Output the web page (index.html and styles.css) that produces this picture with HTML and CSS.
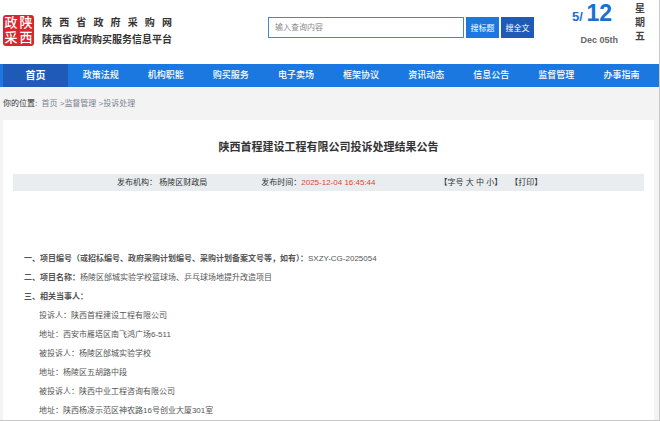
FILE: index.html
```
<!DOCTYPE html>
<html lang="zh-CN">
<head>
  <meta charset="UTF-8">
  <meta name="viewport" content="width=device-width, initial-scale=1.0">
  <title>陕西首程建设工程有限公司投诉处理结果公告</title>
  <link rel="stylesheet" href="styles.css">
</head>
<body>
  <header class="header">
    <a class="logo" href="#">
      <span class="seal"><span>政</span><span>陕</span><span>采</span><span>西</span></span>
      <span class="logo-text">
        <span class="logo-name">陕西省政府采购网</span>
        <span class="logo-sub">陕西省政府购买服务信息平台</span>
      </span>
    </a>

    <form class="search">
      <input class="search-input" type="text" placeholder="输入查询内容" aria-label="输入查询内容">
      <button class="search-btn" type="button">搜标题</button>
      <button class="search-btn search-full" type="button">搜全文</button>
    </form>

    <div class="date">
      <div class="date-main">
        <div class="date-num">5/ <b>12</b></div>
        <div class="date-en">Dec 05th</div>
      </div>
      <div class="week">星期五</div>
    </div>
  </header>

  <nav class="nav">
    <a class="active" href="#">首页</a>
    <a href="#">政策法规</a>
    <a href="#">机构职能</a>
    <a href="#">购买服务</a>
    <a href="#">电子卖场</a>
    <a href="#">框架协议</a>
    <a href="#">资讯动态</a>
    <a href="#">信息公告</a>
    <a href="#">监督管理</a>
    <a href="#">办事指南</a>
  </nav>

  <div class="crumbs">
    <span class="crumbs-label">你的位置:</span>
    <a href="#">首页</a> &gt;<a href="#">监督管理</a> &gt;<a href="#">投诉处理</a>
  </div>

  <main class="article">
    <h1>陕西首程建设工程有限公司投诉处理结果公告</h1>

    <div class="meta">
      <span class="meta-org">发布机构： 杨陵区财政局</span>
      <span class="meta-time">发布时间：<span class="time">2025-12-04 16:45:44</span></span>
      <span class="meta-size">【字号 <a href="#">大</a> <a href="#">中</a> <a href="#">小</a>】</span>
      <a href="#">【打印】</a>
    </div>

    <div class="content">
      <p><strong>一、项目编号（或招标编号、政府采购计划编号、采购计划备案文号等，如有）：</strong>SXZY-CG-2025054</p>
      <p><strong>二、项目名称：</strong>杨陵区邰城实验学校篮球场、乒乓球场地提升改造项目</p>
      <p><strong>三、相关当事人：</strong></p>
      <p class="indent">投诉人：陕西首程建设工程有限公司</p>
      <p class="indent">地址：西安市雁塔区南飞鸿广场6-511</p>
      <p class="indent">被投诉人：杨陵区邰城实验学校</p>
      <p class="indent">地址：杨陵区五胡路中段</p>
      <p class="indent">被投诉人：陕西中业工程咨询有限公司</p>
      <p class="indent">地址：陕西杨凌示范区神农路16号创业大厦301室</p>
    </div>
  </main>
</body>
</html>
```

FILE: styles.css
```
* {
  box-sizing: border-box;
}

body {
  margin: 0;
  font-family: "Liberation Sans", "Noto Sans CJK SC", sans-serif;
  font-size: 8px;
  color: #444;
  background: #f3f3f3;
  border-right: 1px solid #c8c8c8;
  border-bottom: 1px solid #c8c8c8;
}

a {
  color: inherit;
  text-decoration: none;
}

/* header */
.header {
  display: flex;
  align-items: flex-start;
  height: 64px;
  padding: 0 14px 0 3px;
  background: #fff;
}

.logo {
  display: flex;
  gap: 8px;
  margin-top: 15px;
}

.seal {
  display: grid;
  grid-template-columns: 14px 14px;
  grid-template-rows: 14px 14px;
  gap: 1px;
  padding: 1px;
  height: 31px;
  border-radius: 3px;
  background: #d9262c;
  color: #fff;
  font-size: 13px;
  font-weight: 500;
  line-height: 14px;
  text-align: center;
}

.logo-text {
  display: flex;
  flex-direction: column;
  gap: 2px;
  color: #333;
  font-size: 10px;
  font-weight: bold;
  line-height: 15px;
}

.logo-name {
  text-align: justify;
  text-align-last: justify;
}

.search {
  display: flex;
  gap: 2px;
  margin: 17px 0 0 auto;
}

.search-input {
  width: 196px;
  height: 21px;
  padding: 0 6px;
  border: 1px solid #4a87c0;
  background: #fff;
  font-family: inherit;
  font-size: 8px;
}

.search-input::placeholder {
  color: #888;
}

.search-btn {
  width: 33px;
  height: 21px;
  padding: 0;
  border: 0;
  background: #1a78e0;
  color: #fff;
  font-family: inherit;
  font-size: 8px;
}

.search-full {
  background: #1f5ab8;
}

.date {
  display: flex;
  gap: 17px;
  margin-left: 38px;
}

.date-main {
  text-align: right;
}

.date-num {
  padding-right: 6px;
  color: #1a70d2;
  font-size: 13px;
  font-weight: bold;
  line-height: 26px;
}

.date-num b {
  font-size: 23px;
}

.date-en {
  margin-top: 4px;
  color: #666;
  font-size: 9px;
  font-weight: bold;
  line-height: 12px;
}

.week {
  width: 10px;
  margin-top: 2px;
  color: #444;
  font-size: 10px;
  font-weight: bold;
  line-height: 14px;
}

/* main menu */
.nav {
  display: grid;
  grid-template-columns: repeat(10, 1fr);
  padding: 0 5px 0 3px;
  background: #1a78e0;
  color: #fff;
  font-size: 9px;
  font-weight: 500;
  line-height: 23px;
  text-align: center;
}

.nav .active {
  background: #1f5ab8;
  font-size: 10px;
  font-weight: bold;
}

.crumbs {
  padding: 0 3px;
  color: #7c8291;
  line-height: 33px;
}

.crumbs-label {
  margin-right: 2px;
  color: #333;
}

/* article */
.article {
  margin: 0 5px 0 3px;
  padding: 18px 10px 0;
  background: #fff;
}

.article h1 {
  margin: 0;
  color: #333;
  font-size: 11px;
  line-height: 18px;
  text-align: center;
}

.meta {
  display: flex;
  margin-top: 18px;
  padding-left: 104px;
  background: #e9edf0;
  color: #333;
  line-height: 17px;
}

.meta-org {
  margin-right: 54px;
}

.time {
  color: #e0452c;
  font-weight: 500;
}

.meta-size {
  margin: 0 8px 0 64px;
}

.content {
  padding: 58px 11px 0;
  color: #555;
  line-height: 19px;
}

.content p {
  margin: 0;
}

.content .indent {
  padding-left: 15px;
}
```
